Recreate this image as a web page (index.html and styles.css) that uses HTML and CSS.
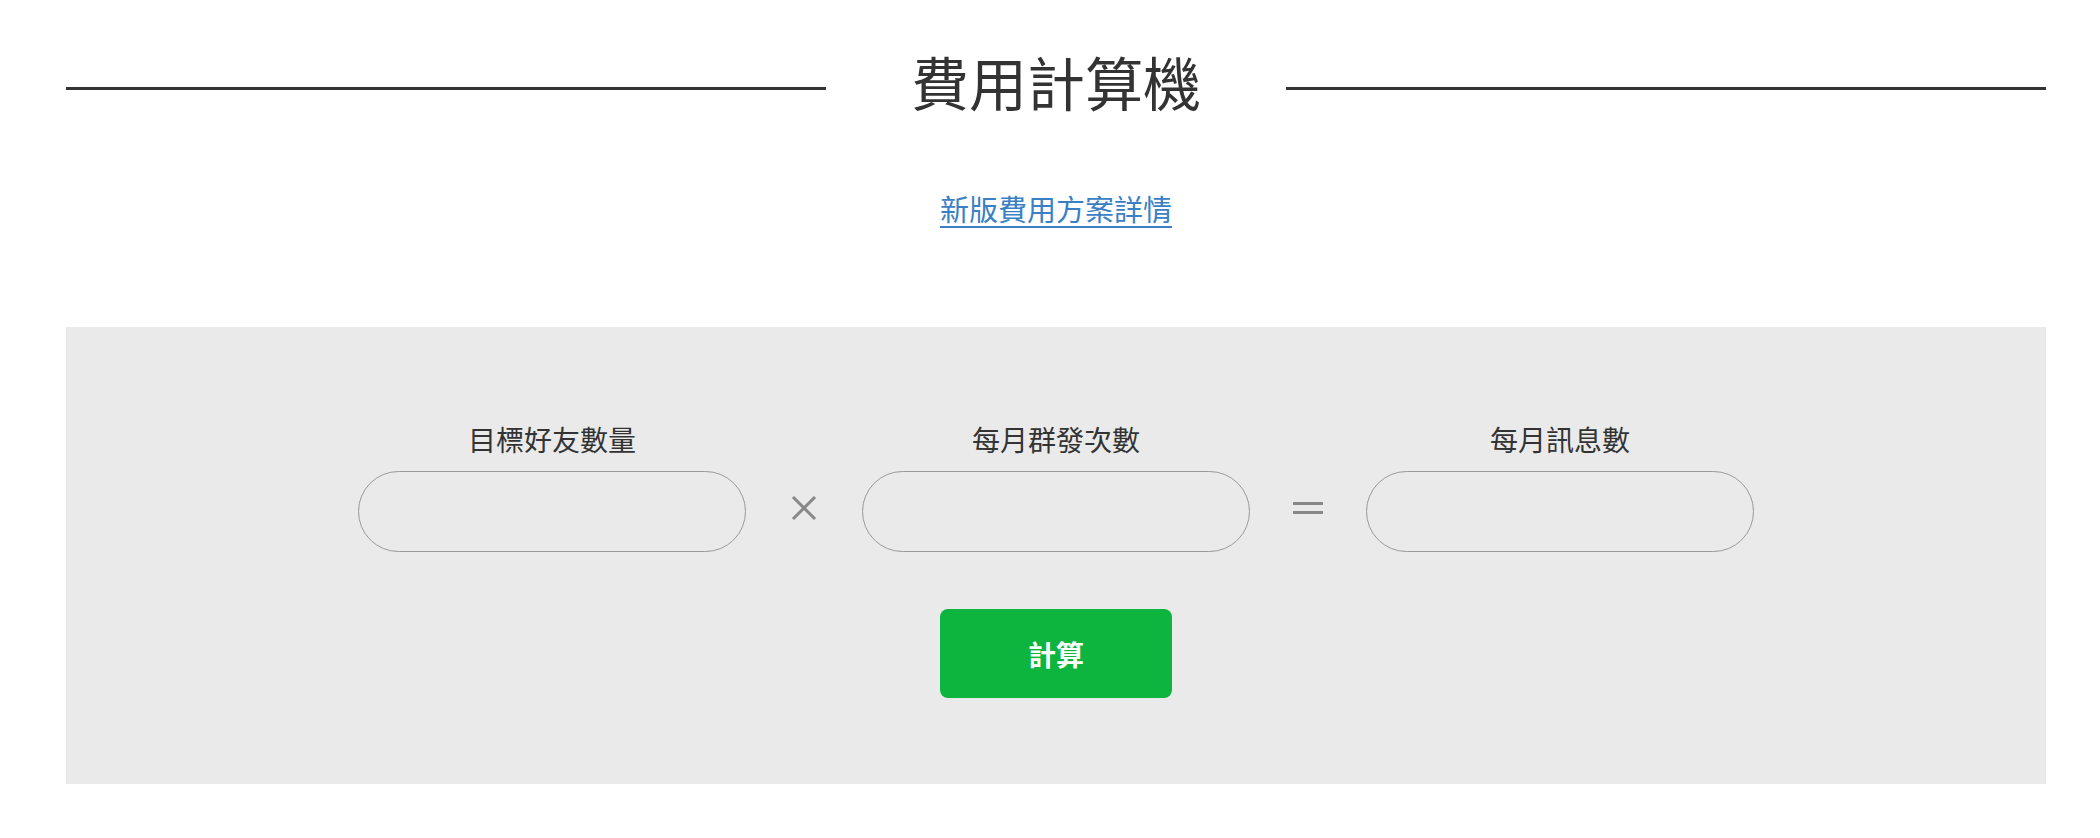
FILE: index.html
```html
<!DOCTYPE html>
<html lang="zh-Hant">
<head>
<meta charset="utf-8">
<title>費用計算機</title>
<link rel="stylesheet" href="styles.css">
</head>
<body>
<div class="page">
  <header class="heading">
    <span class="heading-line"></span>
    <h1 class="heading-title">費用計算機</h1>
    <span class="heading-line"></span>
  </header>
  <div class="link-row">
    <a class="plan-link" href="#">新版費用方案詳情</a>
  </div>
  <section class="calc">
    <div class="calc-grid">
      <label class="calc-label" for="f1">目標好友數量</label>
      <span></span>
      <label class="calc-label" for="f2">每月群發次數</label>
      <span></span>
      <label class="calc-label" for="f3">每月訊息數</label>

      <input class="calc-input" id="f1" type="text">
      <div class="op">
        <svg class="op-times" width="26" height="26" viewBox="0 0 26 26"><path d="M2 2 L24 24 M24 2 L2 24" stroke="#888" stroke-width="3" fill="none"/></svg>
      </div>
      <input class="calc-input" id="f2" type="text">
      <div class="op">
        <span class="op-equals"><span class="bar"></span><span class="bar"></span></span>
      </div>
      <input class="calc-input" id="f3" type="text">
    </div>
    <button class="calc-button" type="button">計算</button>
  </section>
</div>
</body>
</html>
```

FILE: styles.css
```css
* { box-sizing: border-box; }
html, body { margin: 0; padding: 0; background: #fff; }
body {
  font-family: "Noto Sans CJK TC", "Noto Sans", sans-serif;
  color: #333;
}
.page {
  width: 1980px;
  margin-left: 66px;
  padding-top: 38px;
}
.heading {
  display: flex;
  align-items: center;
}
.heading-line {
  flex: 1;
  height: 3px;
  background: #333;
  margin-top: 14px;
}
.heading-title {
  margin: 0;
  width: 460px;
  text-align: center;
  font-size: 58px;
  font-weight: 400;
  line-height: 87px;
  color: #333;
}
.link-row {
  margin-top: 62px;
  text-align: center;
  line-height: 42px;
}
.plan-link {
  font-size: 29px;
  color: #3a80c5;
  text-decoration: underline;
  text-underline-offset: 5px;
  text-decoration-thickness: 2px;
}
.calc {
  margin-top: 92px;
  background: #eaeaea;
  height: 457px;
  padding-top: 91px;
  display: flex;
  flex-direction: column;
  align-items: center;
}
.calc-grid {
  display: grid;
  grid-template-columns: 388px 116px 388px 116px 388px;
  grid-template-rows: 42px 81px;
  row-gap: 11px;
}
.calc-label {
  text-align: center;
  font-size: 28px;
  line-height: 42px;
  color: #333;
}
.calc-input {
  height: 81px;
  width: 100%;
  border: 1px solid #999;
  border-radius: 41px;
  background: transparent;
  font-size: 28px;
  font-family: inherit;
  text-align: center;
  outline: none;
}
.op {
  display: flex;
  align-items: center;
  justify-content: center;
  padding-bottom: 8px;
}
.op-times { display: block; }
.op-equals {
  display: flex;
  flex-direction: column;
  gap: 6px;
}
.op-equals .bar {
  display: block;
  width: 30px;
  height: 3px;
  background: #888;
}
.calc-button {
  margin-top: 57px;
  width: 232px;
  height: 89px;
  border: 0;
  border-radius: 8px;
  background: #0db53f;
  color: #fff;
  font-family: inherit;
  font-size: 28px;
  font-weight: 700;
  cursor: pointer;
}
```
